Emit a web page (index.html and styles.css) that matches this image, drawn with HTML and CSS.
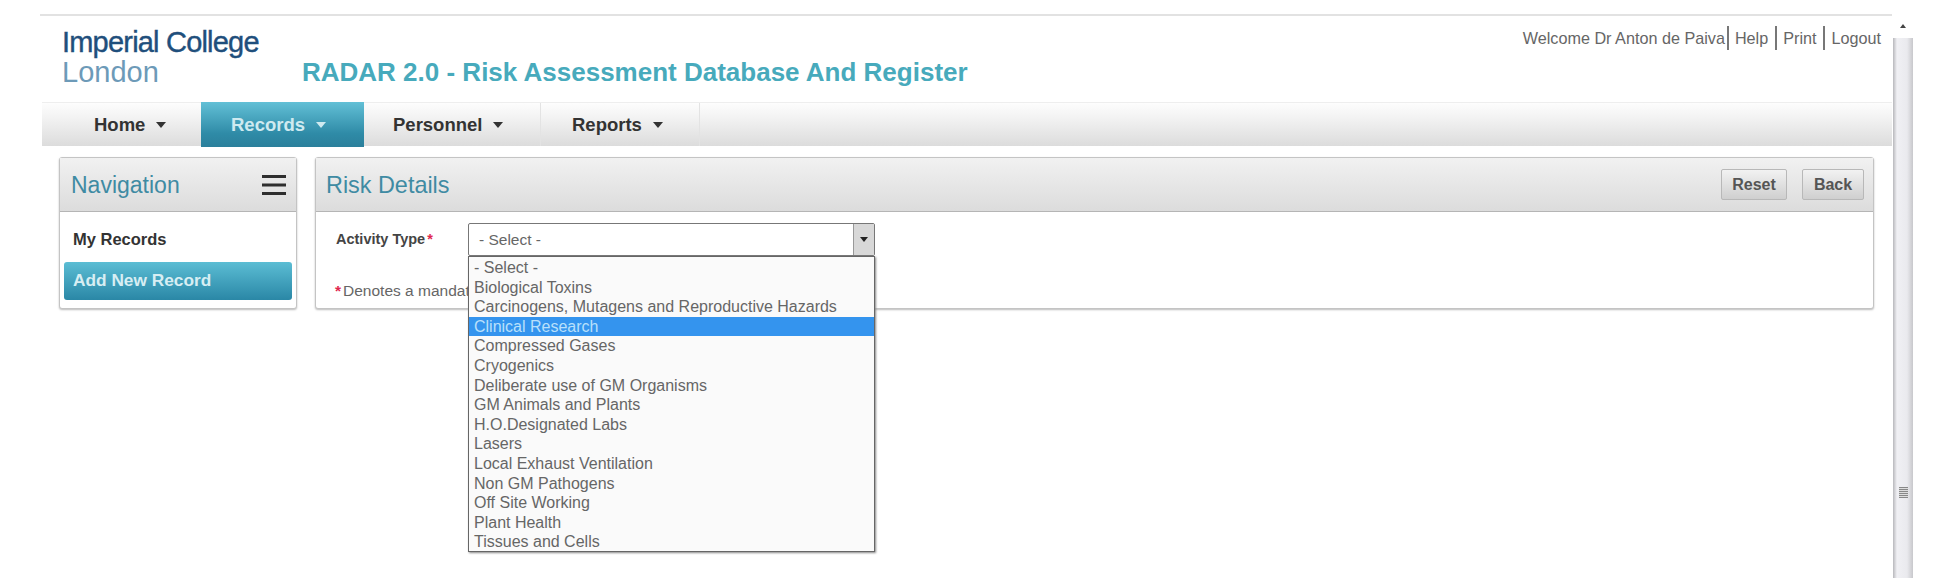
FILE: index.html
```html
<!DOCTYPE html>
<html lang="en">
<head>
<meta charset="utf-8">
<title>RADAR 2.0 - Risk Assessment Database And Register</title>
<link rel="stylesheet" href="styles.css">
</head>
<body>
<div class="shell">
  <header class="masthead">
    <div class="logo">
      <div class="logo-top">Imperial College</div>
      <div class="logo-bottom">London</div>
    </div>
    <h1 class="app-title">RADAR 2.0 - Risk Assessment Database And Register</h1>
    <div class="userbar">
      <span class="userbar-item">Welcome Dr Anton de Paiva</span>
      <a class="userbar-item">Help</a>
      <a class="userbar-item">Print</a>
      <a class="userbar-item">Logout</a>
    </div>
  </header>
  <nav class="menubar">
    <a class="tab tab-home">Home <span class="caret"></span></a>
    <a class="tab tab-records tab-active">Records <span class="caret"></span></a>
    <a class="tab tab-personnel">Personnel <span class="caret"></span></a>
    <a class="tab tab-reports">Reports <span class="caret"></span></a>
  </nav>
  <main class="content">
    <aside class="panel side">
      <div class="panel-head">
        <h2 class="panel-title">Navigation</h2>
        <svg class="burger" width="24" height="20" viewBox="0 0 24 20"><path d="M0 1.5h24M0 10h24M0 18.500h24" stroke="#2e2e2e" stroke-width="3"/></svg>
      </div>
      <div class="side-body">
        <a class="side-link">My Records</a>
        <a class="side-button">Add New Record</a>
      </div>
    </aside>
    <section class="panel details">
      <div class="panel-head">
        <h2 class="panel-title">Risk Details</h2>
        <div class="actions">
          <button class="btn btn-reset">Reset</button>
          <button class="btn btn-back">Back</button>
        </div>
      </div>
      <div class="details-body">
        <div class="field">
          <label class="field-label">Activity Type<span class="star">*</span></label>
          <div class="select-wrap">
            <div class="select-box">
              <span class="select-value">- Select -</span>
              <span class="select-arrow"><span class="select-caret"></span></span>
            </div>
            <ul class="select-list">
              <li>- Select -</li>
              <li>Biological Toxins</li>
              <li>Carcinogens, Mutagens and Reproductive Hazards</li>
              <li class="selected">Clinical Research</li>
              <li>Compressed Gases</li>
              <li>Cryogenics</li>
              <li>Deliberate use of GM Organisms</li>
              <li>GM Animals and Plants</li>
              <li>H.O.Designated Labs</li>
              <li>Lasers</li>
              <li>Local Exhaust Ventilation</li>
              <li>Non GM Pathogens</li>
              <li>Off Site Working</li>
              <li>Plant Health</li>
              <li>Tissues and Cells</li>
            </ul>
          </div>
        </div>
        <p class="note"><span class="star">*</span>Denotes a mandatory field</p>
      </div>
    </section>
  </main>
</div>
<div class="scrollbar">
  <div class="scroll-up"><span class="scroll-up-caret"></span></div>
  <div class="scroll-thumb"><span class="scroll-grip"></span></div>
</div>
</body>
</html>
```
FILE: styles.css
```css
* { box-sizing: border-box; }
html, body { height: 100%; }
body {
  margin: 0;
  background: #fff;
  font-family: "Liberation Sans", Arial, sans-serif;
  color: #555;
  display: flex;
  overflow: hidden;
}
.shell {
  margin: 14px 0 0 40px;
  width: 1852px;
  height: 564px;
  border-top: 2px solid #e2e2e2;
  padding-left: 2px;
}
.masthead {
  height: 87px;
  display: flex;
  align-items: flex-start;
  border-bottom: 1px solid #eee;
  padding-left: 20px;
}
.logo { width: 240px; padding-top: 11px; }
.logo-top {
  font-size: 29px;
  line-height: 31px;
  letter-spacing: -0.8px;
  color: #1f4f7c;
  -webkit-text-stroke: 0.4px #1f4f7c;
}
.logo-bottom {
  font-size: 29px;
  line-height: 28px;
  color: #6d9ab8;
}
.app-title {
  margin: 41px 0 0;
  font-size: 26px;
  line-height: 30px;
  font-weight: bold;
  color: #47aabc;
}
.userbar {
  margin-left: auto;
  margin-right: 11px;
  padding-top: 10px;
  display: flex;
  font-size: 16.200px;
  line-height: 24px;
  color: #666;
}
.userbar-item { padding: 0 7px 0 6px; border-left: 2px solid #777; }
.userbar-item:first-child { border-left: 0; padding-right: 2px; }
.userbar-item:last-child { padding-right: 0; }

.menubar {
  height: 43px;
  display: flex;
  background: linear-gradient(#fdfdfd, #f4f4f4 30%, #dcdcdc);
  font-size: 18.500px;
  font-weight: bold;
  color: #333;
}
.tab {
  display: flex;
  align-items: center;
  gap: 11px;
  border-right: 1px solid #e3e3e3;
}
.tab-home { width: 159px; padding-left: 52px; border-right: 0; }
.tab-records { width: 163px; padding-left: 30px; }
.tab-personnel { width: 177px; padding-left: 29px; }
.tab-reports { width: 159px; padding-left: 31px; }
.tab-active {
  color: #cfeaf0;
  border-right: 0;
  margin-top: -1px;
  height: 45px;
  background: linear-gradient(#62c0d6, #2f8ba7 70%, #2a7f9b);
}
.caret {
  width: 0;
  height: 0;
  border: 5px solid transparent;
  border-top: 6px solid currentColor;
  border-bottom: 0;
}
.content {
  display: flex;
  gap: 18px;
  padding: 11px 18px 0 17px;
  align-items: flex-start;
}
.panel {
  height: 152px;
  border: 1px solid #c4c4c4;
  border-radius: 3px;
  box-shadow: 0 1px 2px #bbb;
  background: #fff;
}
.side { width: 238px; flex: none; }
.details { flex: 1; }
.panel-head {
  height: 54px;
  display: flex;
  align-items: center;
  justify-content: space-between;
  padding: 0 11px;
  background: linear-gradient(#f1f1f1, #dcdcdc);
  border-bottom: 1px solid #b5b5b5;
}
.panel-title {
  margin: 2px 0 0;
  font-size: 23px;
  font-weight: normal;
  color: #3f8ba3;
}
.details .panel-title { margin-left: -1px; font-size: 23.400px; }
.burger { margin-right: -1px; }
.side-body { padding: 9px 4px 0; }
.side-link {
  display: block;
  height: 41px;
  line-height: 37px;
  padding-left: 9px;
  font-size: 16.500px;
  font-weight: bold;
  color: #333;
}
.side-button {
  display: block;
  height: 38px;
  line-height: 37px;
  padding-left: 9px;
  font-size: 17.300px;
  font-weight: bold;
  color: #d7eef3;
  border-radius: 3px;
  background: linear-gradient(#5bbdd4, #2a87a6);
}
.actions { display: flex; gap: 15px; margin-right: -2px; }
.btn {
  height: 31px;
  padding: 0;
  font: bold 16px "Liberation Sans", Arial, sans-serif;
  color: #555;
  border: 1px solid #b8b8b8;
  border-radius: 2px;
  background: linear-gradient(#f2f2f2, #cfcfcf);
}
.btn-reset { width: 66px; }
.btn-back { width: 62px; }
.details-body { padding: 11px 0 0 19px; position: relative; }
.field { display: flex; margin-left: 1px; }
.field-label {
  width: 132px;
  font-size: 14.500px;
  font-weight: bold;
  line-height: 32px;
  color: #444;
}
.star { color: #e0284f; font-weight: bold; margin-left: 2px; }
.select-wrap { width: 407px; position: relative; }
.select-box {
  height: 33px;
  display: flex;
  align-items: center;
  justify-content: space-between;
  border: 1px solid #777;
  border-radius: 2px;
  padding-left: 10px;
  font-size: 15.500px;
  background: #fff;
  color: #666;
}
.select-arrow {
  width: 21px;
  height: 31px;
  display: flex;
  align-items: center;
  justify-content: center;
  background: #d8d8d8;
  border-left: 1px solid #999;
}
.select-caret {
  width: 0;
  height: 0;
  border: 4px solid transparent;
  border-top: 5px solid #222;
  border-bottom: 0;
}
.select-list {
  position: absolute;
  top: 33px;
  left: 0;
  width: 407px;
  height: 296px;
  margin: 0;
  padding: 1px 0 0;
  list-style: none;
  background: #fafafa;
  border: 1px solid #666;
  box-shadow: 1px 1px 2px #888;
  font-size: 16px;
  z-index: 2;
  overflow: hidden;
}
.select-list li {
  height: 19.600px;
  line-height: 19.600px;
  padding-left: 5px;
  white-space: nowrap;
  color: #666;
}
.select-list .selected { background: #3494ee; color: #b9e0fb; }
.note {
  margin: 0;
  padding-top: 25px;
  font-size: 15.500px;
  line-height: 20px;
  color: #666;
}
.note .star { margin: 0 2px 0 0; }
.scrollbar {
  margin: 14px 0 0 1px;
  width: 20px;
  height: 564px;
  display: flex;
  flex-direction: column;
}
.scroll-up {
  height: 24px;
  display: flex;
  align-items: center;
  justify-content: center;
  background: #fff;
}
.scroll-up-caret {
  width: 0;
  height: 0;
  border: 3px solid transparent;
  border-bottom: 4px solid #444;
  border-top: 0;
}
.scroll-thumb {
  flex: 1;
  display: flex;
  align-items: flex-start;
  justify-content: center;
  padding-top: 449px;
  background: linear-gradient(90deg, #b8b8bc, #f0f0f4 20%, #eaeaee 70%, #c8c8cc);
}
.scroll-grip {
  width: 9px;
  height: 11px;
  background: repeating-linear-gradient(#888, #888 1px, #ddd 1px, #ddd 2px);
}
```
